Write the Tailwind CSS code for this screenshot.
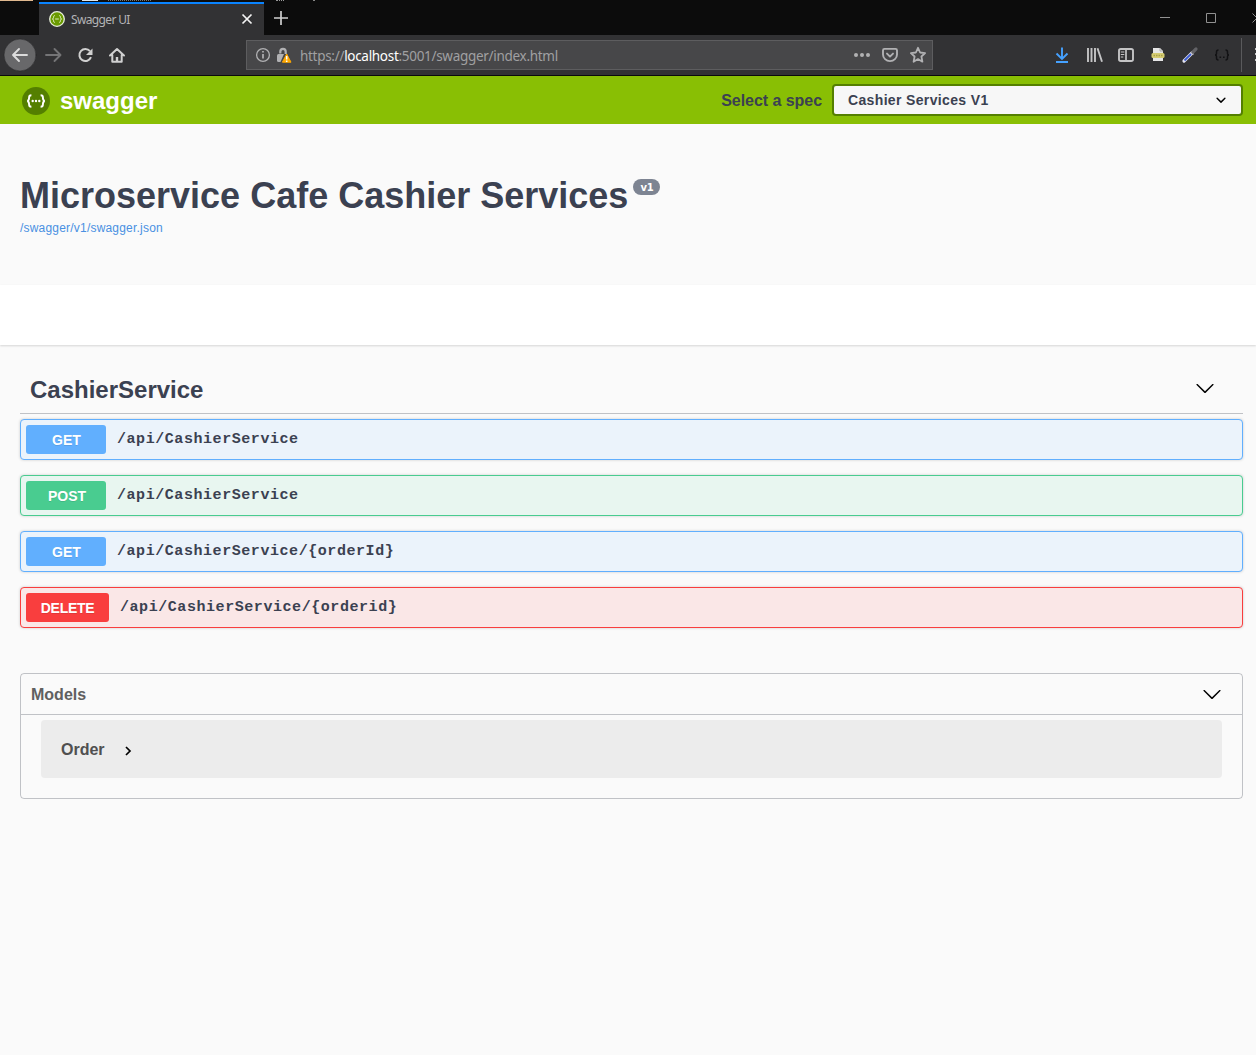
<!DOCTYPE html>
<html lang="en">
<head>
<meta charset="utf-8">
<title>Swagger UI</title>
<script src="https://cdn.jsdelivr.net/npm/@tailwindcss/browser@4"></script>
</head>
<body class="h-[1055px] w-[1256px] overflow-hidden bg-[#fafafa] font-['Liberation_Sans',Arial,sans-serif] text-[#3b4151]">

<!-- Window title bar and tabs -->
<div class="relative flex h-[35px] bg-[#0c0c0c] font-['Noto_Sans',sans-serif]">
  <div class="absolute left-0 top-0 flex h-px w-full overflow-hidden">
    <div class="w-[33px] bg-[#e0b98f]"></div>
    <div class="ml-[49px] w-[16px] bg-[#dfeaf2]"></div>
    <div class="ml-[10px] w-[43px] border-t border-dotted border-[#777]"></div>
    <div class="ml-[125px] w-[8px] border-t border-dotted border-[#999]"></div>
    <div class="ml-[29px] w-[2px] bg-[#888]"></div>
  </div>
  <div class="ml-[39px] mt-[2px] flex h-[33px] w-[225px] items-center border-t-2 border-[#0a84ff] bg-[#323234] pl-[10px] pr-[11px]">
    <svg class="mb-px size-4 shrink-0" viewBox="0 0 16 16"><circle cx="8" cy="8" r="7.300" fill="#6a9a00" stroke="#e8efdc" stroke-width="1.300"/><path d="M6 4.700c-1.300 0-1.500.5-1.500 1.500S4.400 7.800 3.400 8c1 .2 1.100.8 1.100 1.800s.2 1.500 1.500 1.500M10 4.700c1.300 0 1.500.5 1.500 1.500s.1 1.600 1.100 1.800c-1 .2-1.100.8-1.100 1.800s-.2 1.500-1.500 1.500M6.200 8h3.600" fill="none" stroke="#dfeec0" stroke-width="1"/></svg>
    <span class="ml-[6px] text-[12px] leading-4 tracking-[-0.65px] text-[#b4b4b6]">Swagger UI</span>
    <svg class="mb-px ml-auto size-[12px]" viewBox="0 0 12 12"><path d="M1.500 1.500l9 9M10.500 1.500l-9 9" stroke="#f4f4f4" stroke-width="1.700"/></svg>
  </div>
  <svg class="ml-[10px] mt-[11px] size-[14px]" viewBox="0 0 14 14"><path d="M7 0v14M0 7h14" stroke="#d0d0d0" stroke-width="1.700"/></svg>
  <svg class="ml-auto h-[35px] w-[100px]" viewBox="0 0 100 35" fill="none" stroke="#919191"><path d="M4 17.500h10"/><path d="M50.500 13.500h9v9h-9z"/><path d="M96.500 13.500l9 9M105.500 13.500l-9 9"/></svg>
</div>

<!-- Navigation toolbar -->
<div class="flex h-[41px] items-center border-b border-[#0a0a0c] bg-[#323234] font-['Noto_Sans',sans-serif]">
  <svg class="h-10 w-[135px] shrink-0" viewBox="0 0 135 40" fill="none" stroke-linecap="round" stroke-linejoin="round">
    <circle cx="20" cy="20" r="16" fill="#68686a" stroke="#222224" stroke-width=".5"/>
    <path d="M27 20H13M19 14l-6 6 6 6" stroke="#dcdcdc" stroke-width="1.900"/>
    <path d="M46 20h14M54.500 14l6 6-6 6" stroke="#747476" stroke-width="1.900"/>
    <path d="M90 16.200a6 6 0 1 0 1 6" stroke="#d0d0d0" stroke-width="2" stroke-linecap="butt"/>
    <path d="M92.500 13.500v6.500h-6.500z" fill="#d0d0d0"/>
    <path d="M110 20.500l7-6.500 7 6.500M112.300 20v6.700h9.400V20" stroke="#d0d0d0" stroke-width="2"/>
    <path d="M115.800 27v-5h2.400v5z" fill="#d0d0d0"/>
  </svg>
  <div class="ml-[111px] flex h-[30px] w-[687px] items-center border border-[#5d5d5f] bg-[#474749]">
    <svg class="ml-[8px] h-5 w-[38px]" viewBox="0 0 38 20" fill="none">
      <circle cx="8" cy="10" r="6.400" stroke="#b1b1b3" stroke-width="1.300"/><path d="M8 9v4.500M8 6v1.600" stroke="#b1b1b3" stroke-width="1.700"/>
      <path d="M25.300 8.500V6.700a2.700 2.900 0 0 1 5.400 0V9" stroke="#b1b1b3" stroke-width="2.200"/><path d="M22 10.500q0-1.500 1.500-1.500H29l-3.500 8h-2q-1.500 0-1.500-1.500z" fill="#b1b1b3"/>
      <path d="M31.700 9l4.300 8.200h-8.600z" fill="#ffa800" stroke="#ffa800" stroke-linejoin="round"/><path d="M31.700 11v3.500M31.700 15.500v1.500" stroke="#fff" stroke-width="1.500"/>
    </svg>
    <span class="ml-[7px] mt-[2px] whitespace-nowrap text-[13.500px] leading-5 tracking-[-0.3px] text-[#a0a0a2]">https://<span class="text-white">localhost</span>:5001/swagger/index.html</span>
    <svg class="ml-auto mr-[2px] h-5 w-[78px]" viewBox="0 0 78 20" fill="none">
      <g fill="#b1b1b3"><circle cx="4" cy="10" r="2"/><circle cx="10" cy="10" r="2"/><circle cx="16" cy="10" r="2"/></g>
      <path d="M32.500 3.900h11q1.500 0 1.500 1.500v4a7 6.700 0 0 1-14 0v-4q0-1.500 1.500-1.500zM35 8.600l3 3 3-3" stroke="#b1b1b3" stroke-width="1.900" stroke-linejoin="round" stroke-linecap="round"/>
      <path d="M66 2.800l2.100 4.700 5 .6-3.700 3.400 1 5.200-4.400-2.600-4.400 2.600 1-5.200-3.700-3.400 5-.6z" stroke="#b1b1b3" stroke-width="1.800" stroke-linejoin="round"/>
    </svg>
  </div>
  <svg class="ml-auto h-10 w-[206px] shrink-0" viewBox="0 0 206 40" fill="none">
    <path d="M12 12.500v11M6.500 18.500l5.500 5.500 5.500-5.500M6 27h12" stroke="#45a1ff" stroke-width="1.900"/>
    <path d="M38 13v14M41.500 13v14M45 13v14M47.500 13.200l4.500 13.500" stroke="#c4c4c5" stroke-width="1.900"/>
    <rect x="69" y="14" width="14" height="12" rx="1.800" stroke="#c4c4c5" stroke-width="1.900"/><path d="M76 14v12" stroke="#c4c4c5" stroke-width="1.700"/><path d="M70.800 17h3.500M70.800 19.500h3.500M70.800 22h2.500" stroke="#c4c4c5"/>
    <path d="M103 13h7l3 3v10h-10z" fill="#e6e6e6"/><path d="M110 13v3h3" stroke="#999" stroke-width=".8"/><rect x="101.500" y="18" width="13" height="5" rx="1.500" fill="#d5cc72"/><path d="M103.500 20.500h9" stroke="#aaa04a" stroke-width="1.500" stroke-dasharray="1.500 1"/>
    <path d="M134 26l8-8" stroke="#e4e4f0" stroke-width="3.200" stroke-linecap="round"/><path d="M134.500 25.500l6.500-6.500" stroke="#3a5bd0" stroke-width="1.800"/><path d="M141 17l2.500 2.500" stroke="#b8b8c0" stroke-width="1.500"/><path d="M143 17l3-3" stroke="#626266" stroke-width="3.200" stroke-linecap="round"/>
    <path d="M168.500 15q-2 0-2 2v1.500q0 1.500-1.500 1.500 1.500 0 1.500 1.500V23q0 2 2 2M175.500 15q2 0 2 2v1.500q0 1.500 1.500 1.500-1.500 0-1.500 1.500V23q0 2-2 2" stroke="#121214" stroke-width="1.500"/><path d="M169.500 22.300h1.600M173 22.300h1.600" stroke="#121214" stroke-width="1.500"/>
    <path d="M191.500 3v34" stroke="#5a5a5c"/><path d="M205 14h2M205 19h2M205 25h2" stroke="#c4c4c5" stroke-width="2"/>
  </svg>
</div>

<!-- Swagger top bar -->
<header class="flex h-12 items-center bg-[#89bf04] pl-[22px] pr-[13px]">
  <svg class="mt-[2px] size-7" viewBox="0 0 28 28"><circle cx="14" cy="14" r="14" fill="#547f00"/><path d="M9.400 8.300c-2 0-2.300.8-2.300 2.300 0 2-.2 3-1.800 3.400 1.600.4 1.800 1.400 1.800 3.400 0 1.500.3 2.300 2.300 2.300M18.600 8.300c2 0 2.300.8 2.300 2.300 0 2 .2 3 1.800 3.400-1.600.4-1.800 1.400-1.800 3.400 0 1.500-.3 2.300-2.300 2.300" fill="none" stroke="#fff" stroke-width="1.900"/><g fill="#fff"><circle cx="10.700" cy="14" r="1.200"/><circle cx="14" cy="14" r="1.200"/><circle cx="17.300" cy="14" r="1.200"/></g></svg>
  <span class="ml-[10px] mt-[2px] text-[24px] font-bold leading-7 text-white">swagger</span>
  <span class="ml-auto mt-[2px] text-[16px] font-bold leading-5 tracking-[-0.05px]">Select a spec</span>
  <div class="ml-[10px] flex h-8 w-[411px] items-center rounded-[4px] border-2 border-[#547f00] bg-[#f7f7f7] pl-[14px] pr-[10px]">
    <span class="text-[14px] font-bold leading-4 tracking-[0.35px]">Cashier Services V1</span>
    <svg class="ml-auto size-5" viewBox="0 0 20 20"><path d="M13.418 7.859a.695.695 0 0 1 .978 0 .68.68 0 0 1 0 .969l-3.908 3.830a.697.697 0 0 1-.979 0l-3.908-3.830a.68.68 0 0 1 0-.969.695.695 0 0 1 .978 0L10 11l3.418-3.141z"/></svg>
  </div>
</header>

<!-- API title -->
<section class="h-[161px] px-5 pt-[50px]">
  <h1 class="flex h-[43px] items-start text-[36px] font-bold leading-[43px]"><span class="whitespace-nowrap">Microservice Cafe Cashier Services</span><span class="ml-[5px] mt-[5px] flex h-4 w-[27px] items-center justify-center rounded-full bg-[#7d8492] pt-px font-['DejaVu_Sans',Verdana,sans-serif] text-[10px] leading-none tracking-[-0.4px] text-white">v1</span></h1>
  <a class="mt-[3px] block text-[12px] leading-4 tracking-[0.2px] text-[#4990e2]">/swagger/v1/swagger.json</a>
</section>
<div class="h-[60px] bg-white shadow-[0_1px_2px_rgba(0,0,0,0.15)]"></div>

<!-- Operations -->
<main class="pl-5 pr-[13px] pt-[20px]">
  <div class="flex h-[49px] items-center justify-between border-b border-[#3b4151]/30 pl-[10px] pr-[28px]">
    <h2 class="mt-[2px] text-[24px] font-bold leading-7">CashierService</h2>
    <svg class="mb-[2px] size-5" viewBox="0 0 20 20"><path d="M17.418 6.109c.272-.268.709-.268.979 0s.271.701 0 .969l-7.908 7.830c-.27.268-.707.268-.979 0l-7.908-7.830c-.27-.268-.27-.701 0-.969.271-.268.709-.268.979 0L10 13.250l7.418-7.141z"/></svg>
  </div>
  <div class="mt-[5px] flex flex-col gap-[15px] text-[15px] font-bold">
    <div class="flex h-[41px] items-center rounded-[4px] border border-[#61affe] bg-[#ebf3fb] pl-[5px] shadow-[0_0_3px_rgba(0,0,0,0.19)]"><span class="h-[29px] w-20 rounded-[3px] bg-[#61affe] pl-px text-center text-[14px] leading-[30px] text-white [text-shadow:0_1px_0_rgba(0,0,0,0.1)]">GET</span><span class="ml-[11px] mt-[2px] font-['Liberation_Mono','Courier_New',monospace] tracking-[0.56px]">/api/CashierService</span></div>
    <div class="flex h-[41px] items-center rounded-[4px] border border-[#49cc90] bg-[#e8f6f0] pl-[5px] shadow-[0_0_3px_rgba(0,0,0,0.19)]"><span class="h-[29px] w-20 rounded-[3px] bg-[#49cc90] pl-[2px] text-center text-[14px] leading-[30px] text-white [text-shadow:0_1px_0_rgba(0,0,0,0.1)]">POST</span><span class="ml-[11px] mt-[2px] font-['Liberation_Mono','Courier_New',monospace] tracking-[0.56px]">/api/CashierService</span></div>
    <div class="flex h-[41px] items-center rounded-[4px] border border-[#61affe] bg-[#ebf3fb] pl-[5px] shadow-[0_0_3px_rgba(0,0,0,0.19)]"><span class="h-[29px] w-20 rounded-[3px] bg-[#61affe] pl-px text-center text-[14px] leading-[30px] text-white [text-shadow:0_1px_0_rgba(0,0,0,0.1)]">GET</span><span class="ml-[11px] mt-[2px] font-['Liberation_Mono','Courier_New',monospace] tracking-[0.56px]">/api/CashierService/{orderId}</span></div>
    <div class="flex h-[41px] items-center rounded-[4px] border border-[#f93e3e] bg-[#fae7e7] pl-[5px] shadow-[0_0_3px_rgba(0,0,0,0.19)]"><span class="h-[29px] w-[83px] rounded-[3px] bg-[#f93e3e] text-center text-[14px] leading-[30px] tracking-[-0.3px] text-white [text-shadow:0_1px_0_rgba(0,0,0,0.1)]">DELETE</span><span class="ml-[11px] mt-[2px] font-['Liberation_Mono','Courier_New',monospace] tracking-[0.56px]">/api/CashierService/{orderid}</span></div>
  </div>

  <!-- Models -->
  <section class="mt-[45px] h-[126px] rounded-[4px] border border-[#3b4151]/30">
    <div class="flex h-[41px] items-center justify-between border-b border-[#3b4151]/30 pl-[10px] pr-[20px]">
      <h4 class="mt-[2px] text-[16px] font-bold leading-5 text-[#606060]">Models</h4>
      <svg class="size-5" viewBox="0 0 20 20"><path d="M17.418 6.109c.272-.268.709-.268.979 0s.271.701 0 .969l-7.908 7.830c-.27.268-.707.268-.979 0l-7.908-7.830c-.27-.268-.27-.701 0-.969.271-.268.709-.268.979 0L10 13.250l7.418-7.141z"/></svg>
    </div>
    <div class="mx-5 mt-[5px] flex h-[58px] items-center rounded-[4px] bg-[#ececec] pl-5">
      <span class="mt-[2px] text-[16px] font-bold leading-5 text-[#505050]">Order</span>
      <svg class="ml-[19px] mt-[3px] h-[10px] w-2" viewBox="0 0 8 10"><path d="M2 1l4 4-4 4" fill="none" stroke="#000" stroke-width="1.700"/></svg>
    </div>
  </section>
</main>
</body>
</html>
